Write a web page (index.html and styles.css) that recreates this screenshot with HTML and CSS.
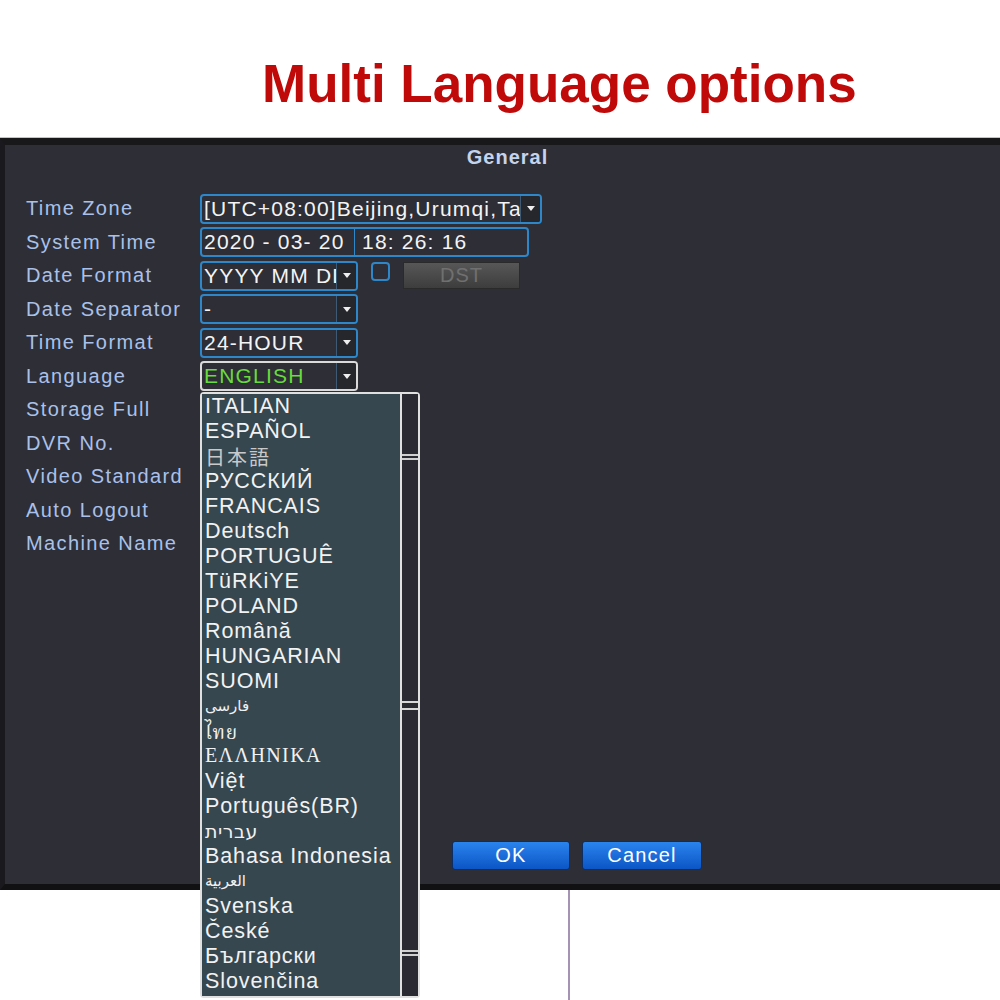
FILE: index.html
```html
<!DOCTYPE html>
<html lang="en">
<head>
    <meta charset="UTF-8">
    <meta name="viewport" content="width=device-width, initial-scale=1.0">
    <title>Multi Language options</title>
    <link rel="stylesheet" href="styles.css">
</head>
<body>
    <div class="title">Multi Language options</div>

    <div class="dialog">
        <div class="panel">
            <div class="heading">General</div>

            <div class="form">
                <div class="row">
                    <span class="label">Time Zone</span>
                    <div class="field field-zone">
                        <span class="value">[UTC+08:00]Beijing,Urumqi,Taipei</span>
                        <span class="arrow"></span>
                    </div>
                </div>
                <div class="row">
                    <span class="label">System Time</span>
                    <div class="field field-time">
                        <span class="value seg-date">2020 - 03- 20</span>
                        <span class="value seg-clock">18: 26: 16</span>
                    </div>
                </div>
                <div class="row">
                    <span class="label">Date Format</span>
                    <div class="field field-short">
                        <span class="value">YYYY MM DD</span>
                        <span class="arrow"></span>
                    </div>
                    <span class="checkbox"></span>
                    <span class="dst">DST</span>
                </div>
                <div class="row">
                    <span class="label">Date Separator</span>
                    <div class="field field-short">
                        <span class="value">-</span>
                        <span class="arrow"></span>
                    </div>
                </div>
                <div class="row">
                    <span class="label">Time Format</span>
                    <div class="field field-short">
                        <span class="value">24-HOUR</span>
                        <span class="arrow"></span>
                    </div>
                </div>
                <div class="row">
                    <span class="label">Language</span>
                    <div class="field field-short field-active">
                        <span class="value value-green">ENGLISH</span>
                        <span class="arrow"></span>
                    </div>
                </div>
                <div class="row"><span class="label">Storage Full</span></div>
                <div class="row"><span class="label">DVR No.</span></div>
                <div class="row"><span class="label">Video Standard</span></div>
                <div class="row"><span class="label">Auto Logout</span></div>
                <div class="row"><span class="label">Machine Name</span></div>
            </div>

            <div class="buttons">
                <button class="btn btn-ok">OK</button>
                <button class="btn btn-cancel">Cancel</button>
            </div>

            <!-- open language list, drawn over the form -->
            <div class="dropdown">
                <ul class="options">
                    <li>ITALIAN</li>
                    <li>ESPAÑOL</li>
                    <li class="opt-cjk">日本語</li>
                    <li>РУССКИЙ</li>
                    <li>FRANCAIS</li>
                    <li>Deutsch</li>
                    <li>PORTUGUÊ</li>
                    <li>TüRKiYE</li>
                    <li>POLAND</li>
                    <li>Română</li>
                    <li>HUNGARIAN</li>
                    <li>SUOMI</li>
                    <li class="opt-arabic">فارسی</li>
                    <li class="opt-thai">ไทย</li>
                    <li class="opt-greek">ΕΛΛΗΝΙΚΑ</li>
                    <li>Việt</li>
                    <li>Português(BR)</li>
                    <li class="opt-hebrew">תירבע</li>
                    <li>Bahasa Indonesia</li>
                    <li class="opt-arabic">العربية</li>
                    <li>Svenska</li>
                    <li>České</li>
                    <li>Български</li>
                    <li>Slovenčina</li>
                </ul>
                <div class="scrollbar">
                    <div class="track-top"></div>
                    <div class="thumb"><span class="grip"></span></div>
                    <div class="track-bottom"></div>
                </div>
            </div>
        </div>
    </div>

    <div class="rule"></div>
</body>
</html>
```

FILE: styles.css
```css
html, body {
    overflow: hidden;
}
body {
    margin: 0;
    background: #ffffff;
    font-family: "Liberation Sans", Arial, sans-serif;
}
.title {
    height: 138px;
    box-sizing: border-box;
    padding: 54px 0 0 262px;
    font-size: 53px;
    line-height: 60px;
    font-weight: bold;
    color: #c00a0a;
}
.dialog {
    border-top: 7px solid #18181b;
    border-left: 5px solid #1a1a1e;
    border-bottom: 6px solid #111114;
    box-shadow: 0 -1px 0 #c4c4c4;
}
.panel {
    position: relative;
    height: 739px;
    display: flex;
    flex-direction: column;
    background: #2e2e36;
}
.heading {
    height: 24px;
    line-height: 24px;
    padding-left: 10px;
    text-align: center;
    font-size: 20px;
    font-weight: bold;
    letter-spacing: 1px;
    color: #c4d3ee;
}
.form {
    margin-top: 23px;
    padding-left: 21px;
}
.row {
    display: flex;
    align-items: center;
    height: 33.5px;
}
.label {
    width: 174px;
    flex-shrink: 0;
    font-size: 20px;
    letter-spacing: 1.4px;
    color: #a9c1ea;
}
.field {
    display: flex;
    height: 30px;
    box-sizing: border-box;
    border: 2px solid #2e87c8;
    border-radius: 4px;
    overflow: hidden;
}
.field-zone {
    width: 342px;
}
.field-time {
    width: 329px;
}
.field-short {
    width: 158px;
}
.field-active {
    border-color: #dadada;
}
.value {
    flex: 1;
    min-width: 0;
    padding-left: 2px;
    overflow: hidden;
    white-space: nowrap;
    font-size: 21px;
    line-height: 26px;
    letter-spacing: 1.2px;
    color: #f4f4f4;
}
.value-green {
    color: #68dc3c;
}
.seg-date {
    flex: none;
    width: 150px;
    border-right: 1px solid #2e87c8;
}
.seg-clock {
    padding-left: 7px;
}
.arrow {
    width: 19px;
    flex-shrink: 0;
    display: flex;
    align-items: center;
    justify-content: center;
    border-left: 1px solid #3e5a74;
    background: #26262d;
}
.arrow::after {
    content: "";
    border-left: 4px solid transparent;
    border-right: 4px solid transparent;
    border-top: 5px solid #eeeeee;
}
.checkbox {
    align-self: flex-start;
    width: 19px;
    height: 19px;
    box-sizing: border-box;
    margin: 3px 0 0 13px;
    border: 2px solid #2e87c8;
    border-radius: 4px;
}
.dst {
    width: 117px;
    height: 27px;
    box-sizing: border-box;
    margin-left: 13px;
    border: 1px solid #2a2a2a;
    background: linear-gradient(#575757, #3d3d3d);
    text-align: center;
    font-size: 20px;
    line-height: 25px;
    letter-spacing: 1px;
    color: #707070;
}
.buttons {
    margin-top: auto;
    display: flex;
    gap: 12px;
    padding: 0 0 14px 447px;
}
.btn {
    height: 29px;
    padding: 0;
    border: 1px solid #0b2e66;
    border-radius: 3px;
    background: linear-gradient(#2a84ee, #0c55c6);
    font-family: "Liberation Sans", Arial, sans-serif;
    font-size: 20px;
    letter-spacing: 1.2px;
    color: #ffffff;
}
.btn-ok {
    width: 118px;
}
.btn-cancel {
    width: 120px;
}
.dropdown {
    position: absolute;
    top: 247px;
    left: 195px;
    width: 220px;
    height: 606px;
    box-sizing: border-box;
    display: flex;
    border: 2px solid #e0e0e0;
    border-radius: 4px;
}
.options {
    flex: 1;
    margin: 0;
    padding: 0;
    list-style: none;
    background: #364750;
    border-right: 2px solid #e0e0e0;
}
.options li {
    height: 25px;
    line-height: 25px;
    padding-left: 3px;
    white-space: nowrap;
    font-size: 21.5px;
    letter-spacing: 0.9px;
    color: #f2f2f2;
}
.options .opt-cjk {
    font-family: "Noto Sans CJK JP", sans-serif;
    font-size: 20px;
    letter-spacing: 2px;
    color: #c9c9c9;
}
.options .opt-arabic {
    font-family: "DejaVu Sans", sans-serif;
    font-size: 15px;
    letter-spacing: 0;
}
.options .opt-thai {
    font-family: "Noto Serif Thai", "Noto Sans Thai", serif;
    font-size: 19px;
    line-height: 30px;
}
.options .opt-greek {
    font-family: "Liberation Serif", serif;
    font-size: 20px;
    letter-spacing: 1.4px;
    line-height: 22px;
}
.options .opt-hebrew {
    font-family: "DejaVu Sans", sans-serif;
    font-size: 19px;
    letter-spacing: 0.5px;
    direction: ltr;
    unicode-bidi: bidi-override;
}
.scrollbar {
    width: 16px;
    display: flex;
    flex-direction: column;
    background: #2a2a33;
}
.track-top {
    height: 60px;
    border-bottom: 2px solid #d0d0d0;
}
.thumb {
    flex: 1;
    margin-top: 2px;
    display: flex;
    align-items: center;
    justify-content: center;
    border-top: 2px solid #d0d0d0;
    border-bottom: 2px solid #d0d0d0;
}
.grip {
    width: 16px;
    height: 5px;
    border-top: 2px solid #d8d8d8;
    border-bottom: 2px solid #d8d8d8;
}
.track-bottom {
    height: 40px;
    margin-top: 2px;
    border-top: 2px solid #d0d0d0;
}
.rule {
    width: 2px;
    height: 110px;
    margin-left: 568px;
    background: #a493b3;
}
```
